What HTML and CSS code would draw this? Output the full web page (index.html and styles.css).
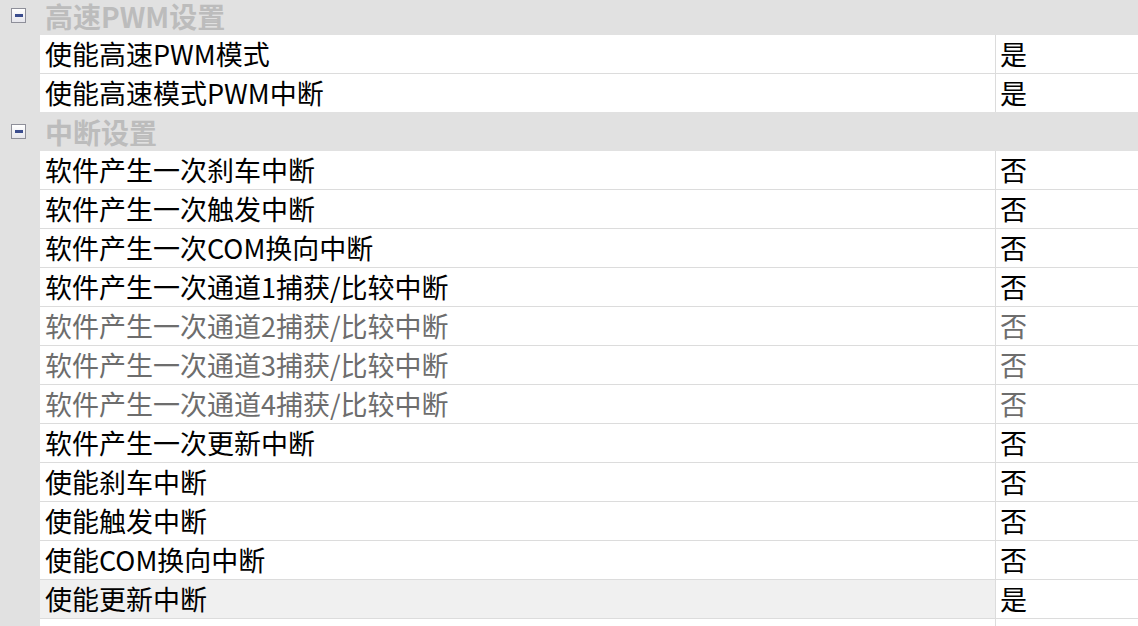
FILE: index.html
```html
<!DOCTYPE html>
<html lang="zh-CN">
<head>
  <meta charset="UTF-8" />
  <title>属性</title>
  <link rel="stylesheet" href="styles.css">
</head>
<body>
  <div class="grid">
    <div class="group">
      <span class="toggle"></span>
      <span class="group-title">高速PWM设置</span>
    </div>
    <div class="row"><div class="name">使能高速PWM模式</div><div class="value">是</div></div>
    <div class="row last"><div class="name">使能高速模式PWM中断</div><div class="value">是</div></div>

    <div class="group">
      <span class="toggle"></span>
      <span class="group-title">中断设置</span>
    </div>
    <div class="row"><div class="name">软件产生一次刹车中断</div><div class="value">否</div></div>
    <div class="row"><div class="name">软件产生一次触发中断</div><div class="value">否</div></div>
    <div class="row"><div class="name">软件产生一次COM换向中断</div><div class="value">否</div></div>
    <div class="row"><div class="name">软件产生一次通道1捕获/比较中断</div><div class="value">否</div></div>
    <div class="row disabled"><div class="name">软件产生一次通道2捕获/比较中断</div><div class="value">否</div></div>
    <div class="row disabled"><div class="name">软件产生一次通道3捕获/比较中断</div><div class="value">否</div></div>
    <div class="row disabled"><div class="name">软件产生一次通道4捕获/比较中断</div><div class="value">否</div></div>
    <div class="row"><div class="name">软件产生一次更新中断</div><div class="value">否</div></div>
    <div class="row"><div class="name">使能刹车中断</div><div class="value">否</div></div>
    <div class="row"><div class="name">使能触发中断</div><div class="value">否</div></div>
    <div class="row"><div class="name">使能COM换向中断</div><div class="value">否</div></div>
    <div class="row selected"><div class="name">使能更新中断</div><div class="value">是</div></div>
    <div class="row tail"><div class="name"></div><div class="value"></div></div>
  </div>
</body>
</html>
```

FILE: styles.css
```css
body {
  margin: 0;
  padding: 0;
  background: #e1e1e1;
  font-family: "Microsoft YaHei", "Noto Sans CJK SC", sans-serif;
  overflow: hidden;
}

.grid {
  margin-top: -4px;
  width: 1138px;
}

.group {
  height: 39px;
  display: flex;
  align-items: center;
  background: #e1e1e1;
}

.toggle {
  box-sizing: border-box;
  width: 15px;
  height: 15px;
  margin-left: 11px;
  margin-right: 19px;
  border: 1px solid #8e8f99;
  background: linear-gradient(#ffffff, #e6e6ec);
  display: flex;
  align-items: center;
  justify-content: center;
}

.toggle::before {
  content: "";
  width: 8px;
  height: 3px;
  background: #3b4d8e;
}

.group-title {
  font-size: 28px;
  line-height: 1;
  font-weight: bold;
  color: #bcbcbc;
}

.row {
  display: flex;
  height: 39px;
  margin-left: 40px;
  box-sizing: border-box;
  border-bottom: 1px solid #dcdcdc;
  background: #ffffff;
}

.row.last {
  border-bottom: none;
  height: 38px;
}

.row.tail {
  height: 11px;
  border-bottom: none;
}

.name {
  width: 955px;
  padding-left: 5px;
  box-sizing: border-box;
  font-size: 27px;
  line-height: 38px;
  color: #000;
  white-space: nowrap;
}

.value {
  flex: 1;
  border-left: 1px solid #dcdcdc;
  padding-left: 4px;
  font-size: 27px;
  line-height: 38px;
  color: #000;
}

.row.disabled .name,
.row.disabled .value {
  color: #6d6d6d;
}

.row.selected .name {
  background: #f0f0f0;
}
```
